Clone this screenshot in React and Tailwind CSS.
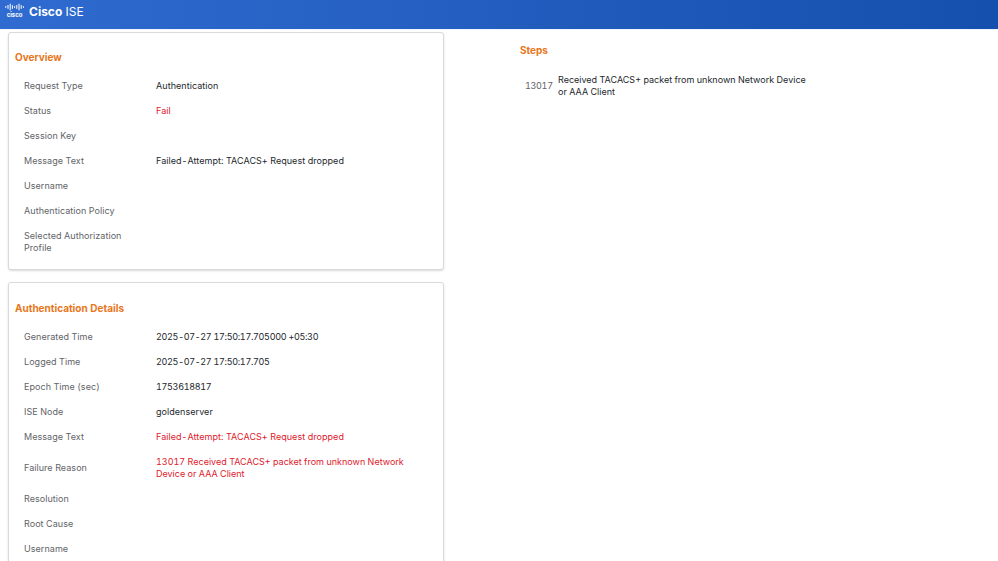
import React from "react";

const overview = [
  { label: "Request Type", value: "Authentication" },
  { label: "Status", value: "Fail", red: true },
  { label: "Session Key" },
  { label: "Message Text", value: "Failed-Attempt: TACACS+ Request dropped" },
  { label: "Username" },
  { label: "Authentication Policy" },
  { label: "Selected Authorization Profile" },
];

const details = [
  { label: "Generated Time", value: "2025-07-27 17:50:17.705000 +05:30", track: "tracking-[-0.3px]" },
  { label: "Logged Time", value: "2025-07-27 17:50:17.705", track: "tracking-[-0.3px]" },
  { label: "Epoch Time (sec)", value: "1753618817", track: "tracking-[-0.3px]" },
  { label: "ISE Node", value: "goldenserver" },
  { label: "Message Text", value: "Failed-Attempt: TACACS+ Request dropped", red: true },
  {
    label: "Failure Reason",
    value: "13017 Received TACACS+ packet from unknown Network Device or AAA Client",
    red: true,
    track: "tracking-normal",
  },
  { label: "Resolution" },
  { label: "Root Cause" },
  { label: "Username" },
];

const CiscoLogo = () => {
  const bars = [2, 4, 7, 4, 2, 4, 7, 4, 2];
  return (
    <div className="flex flex-col items-center w-[19px]">
      <svg width="19" height="8" viewBox="0 0 19 8">
        {bars.map((h, i) => (
          <rect key={i} x={i * 2.2 + 0.3} y={(8 - h) / 2} width="1" height={h} fill="#ffffff" rx="0.4" />
        ))}
      </svg>
      <span className="text-[6px] leading-[5px] font-bold text-white mt-px tracking-normal">cisco</span>
    </div>
  );
};

const Row = ({ label, value, red, track }) => (
  <div className="flex items-center py-[6.5px] pl-[9px]">
    <div className="w-[132px] shrink-0 pr-4 text-[#5f6468]">{label}</div>
    <div className={`w-[260px] ${red ? "text-[#e0202c]" : "text-[#23282c]"} ${track || ""}`}>{value}</div>
  </div>
);

const Card = ({ title, rows, className, headClass }) => (
  <div className={`border border-[#d8dbdd] rounded-[3px] shadow-[0_1px_2px_rgba(0,0,0,0.15)] px-[6px] bg-white ${className}`}>
    <h2 className={`text-[10px] leading-[14px] font-bold tracking-normal text-[#e8761c] pb-[9px] ${headClass}`}>{title}</h2>
    {rows.map((r) => (
      <Row key={r.label} {...r} />
    ))}
  </div>
);

export default function App() {
  return (
    <div
      className="w-[998px] h-[561px] overflow-hidden bg-white text-[9px] leading-[12px] tracking-[0.05px] tabular-nums"
      style={{ fontFamily: '"Inter", "Liberation Sans", sans-serif' }}
    >
      <header className="h-[29px] flex items-start pl-[5px] pt-[3px] gap-[5px] bg-gradient-to-r from-[#2f6bd0] to-[#1550ae]">
        <CiscoLogo />
        <div className="text-white text-[12px] leading-[18px] tracking-normal">
          <span className="font-bold">Cisco</span> ISE
        </div>
      </header>
      <div className="flex border-t-[1px] border-[#eef6fb]">
        <div className="w-[436px] ml-[8px] mt-[2px] shrink-0 flex flex-col gap-[12px]">
          <Card title="Overview" rows={overview} className="pb-[9px]" headClass="pt-[17px]" />
          <Card title="Authentication Details" rows={details} className="pb-[12px]" headClass="pt-[18px]" />
        </div>
        <div className="ml-[76px] pt-[13px] w-[300px]">
          <h2 className="text-[10px] leading-[14px] font-bold tracking-normal text-[#e8761c]">Steps</h2>
          <div className="flex items-center mt-[17px] pl-[5px]">
            <div className="w-[33px] shrink-0 text-[#5f6468] tracking-[-0.3px]">13017</div>
            <div className="text-[#23282c] w-[255px] tracking-normal">
              Received TACACS+ packet from unknown Network Device or AAA Client
            </div>
          </div>
        </div>
      </div>
    </div>
  );
}
